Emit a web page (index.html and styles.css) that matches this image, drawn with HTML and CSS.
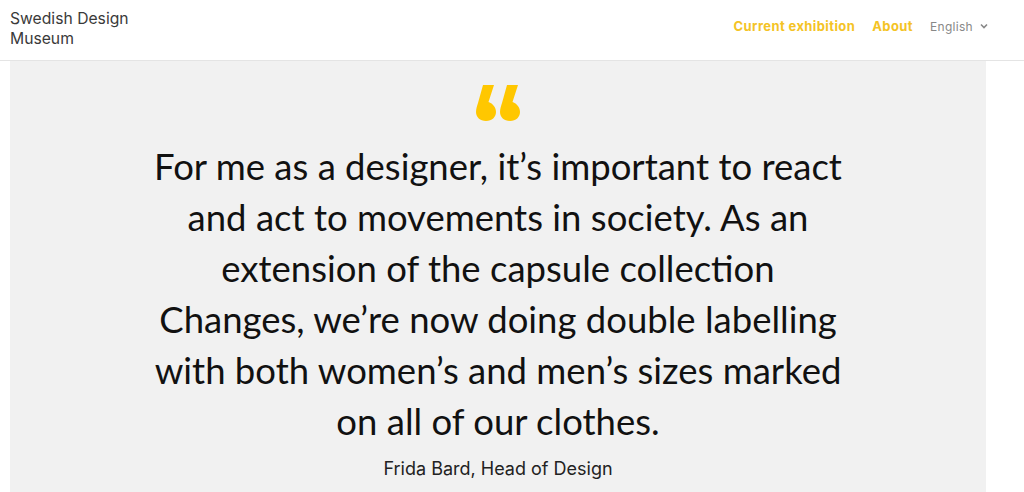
FILE: index.html
```html
<!DOCTYPE html>
<html lang="en">
<head>
<meta charset="utf-8">
<title>Swedish Design Museum</title>
<link rel="stylesheet" href="styles.css">
</head>
<body>
<header class="site-header">
  <a class="logo" href="#">Swedish Design<br>Museum</a>
  <nav class="nav">
    <a class="nav-link" href="#">Current exhibition</a>
    <a class="nav-link" href="#">About</a>
    <span class="lang">English
      <svg class="chev" width="8" height="6" viewBox="0 0 8 6"><path d="M1 1.5 L4 4.5 L7 1.5" fill="none" stroke="#888" stroke-width="1.6"/></svg>
    </span>
  </nav>
</header>
<main class="panel">
  <svg class="qmark" width="46" height="36" viewBox="0 0 46 36">
    <path d="M8 0 H19 L13.5 17 C18 18.5 21 22.5 21 27 C21 32 17 36 11 36 C5 36 1 32 1 27 C1 24 2 21 3 18 Z" fill="#ffc700"/>
    <path d="M32 0 H43 L37.5 17 C42 18.5 45 22.5 45 27 C45 32 41 36 35 36 C29 36 25 32 25 27 C25 24 26 21 27 18 Z" fill="#ffc700"/>
  </svg>
  <blockquote class="quote">For me as a designer, it’s important to react<br>and act to movements in society. As an<br>extension of the capsule collection<br>Changes, we’re now doing double labelling<br>with both women’s and men’s sizes marked<br>on all of our clothes.</blockquote>
  <p class="cite">Frida Bard, Head of Design</p>
</main>
</body>
</html>
```
FILE: styles.css
```css
* { box-sizing: border-box; }
html, body { margin: 0; padding: 0; background: #fff; }
body { font-family: "Inter", "Roboto", sans-serif; color: #222; height: 492px; overflow: hidden; }
.site-header {
  height: 61px;
  display: flex;
  justify-content: space-between;
  align-items: flex-start;
  padding: 8px 36px 0 10px;
  border-bottom: 1px solid #e4e4e4;
}
.logo {
  font-size: 15.7px;
  line-height: 20px;
  color: #3a3a3a;
  text-decoration: none;
  padding-top: 1px;
}
.nav {
  display: flex;
  align-items: center;
  gap: 17px;
  padding-top: 10px;
}
.nav-link {
  color: #f4c325;
  font-weight: 700;
  font-size: 13px;
  letter-spacing: 0.4px;
  text-decoration: none;
}
.lang {
  color: #888;
  font-size: 12px;
  letter-spacing: 0.3px;
  display: flex;
  align-items: center;
  gap: 7px;
}
.panel {
  margin: 0 38px 0 10px;
  background: #f1f1f1;
  height: 431px;
  display: flex;
  flex-direction: column;
  align-items: center;
  padding-top: 24px;
}
.qmark { display: block; }
.quote {
  margin: 20px 0 0;
  font-family: "Lato", sans-serif;
  font-size: 36.5px;
  line-height: 51px;
  text-align: center;
  color: #111;
}
.cite {
  margin: 11px 0 0;
  font-size: 18px;
  color: #222;
}
```
